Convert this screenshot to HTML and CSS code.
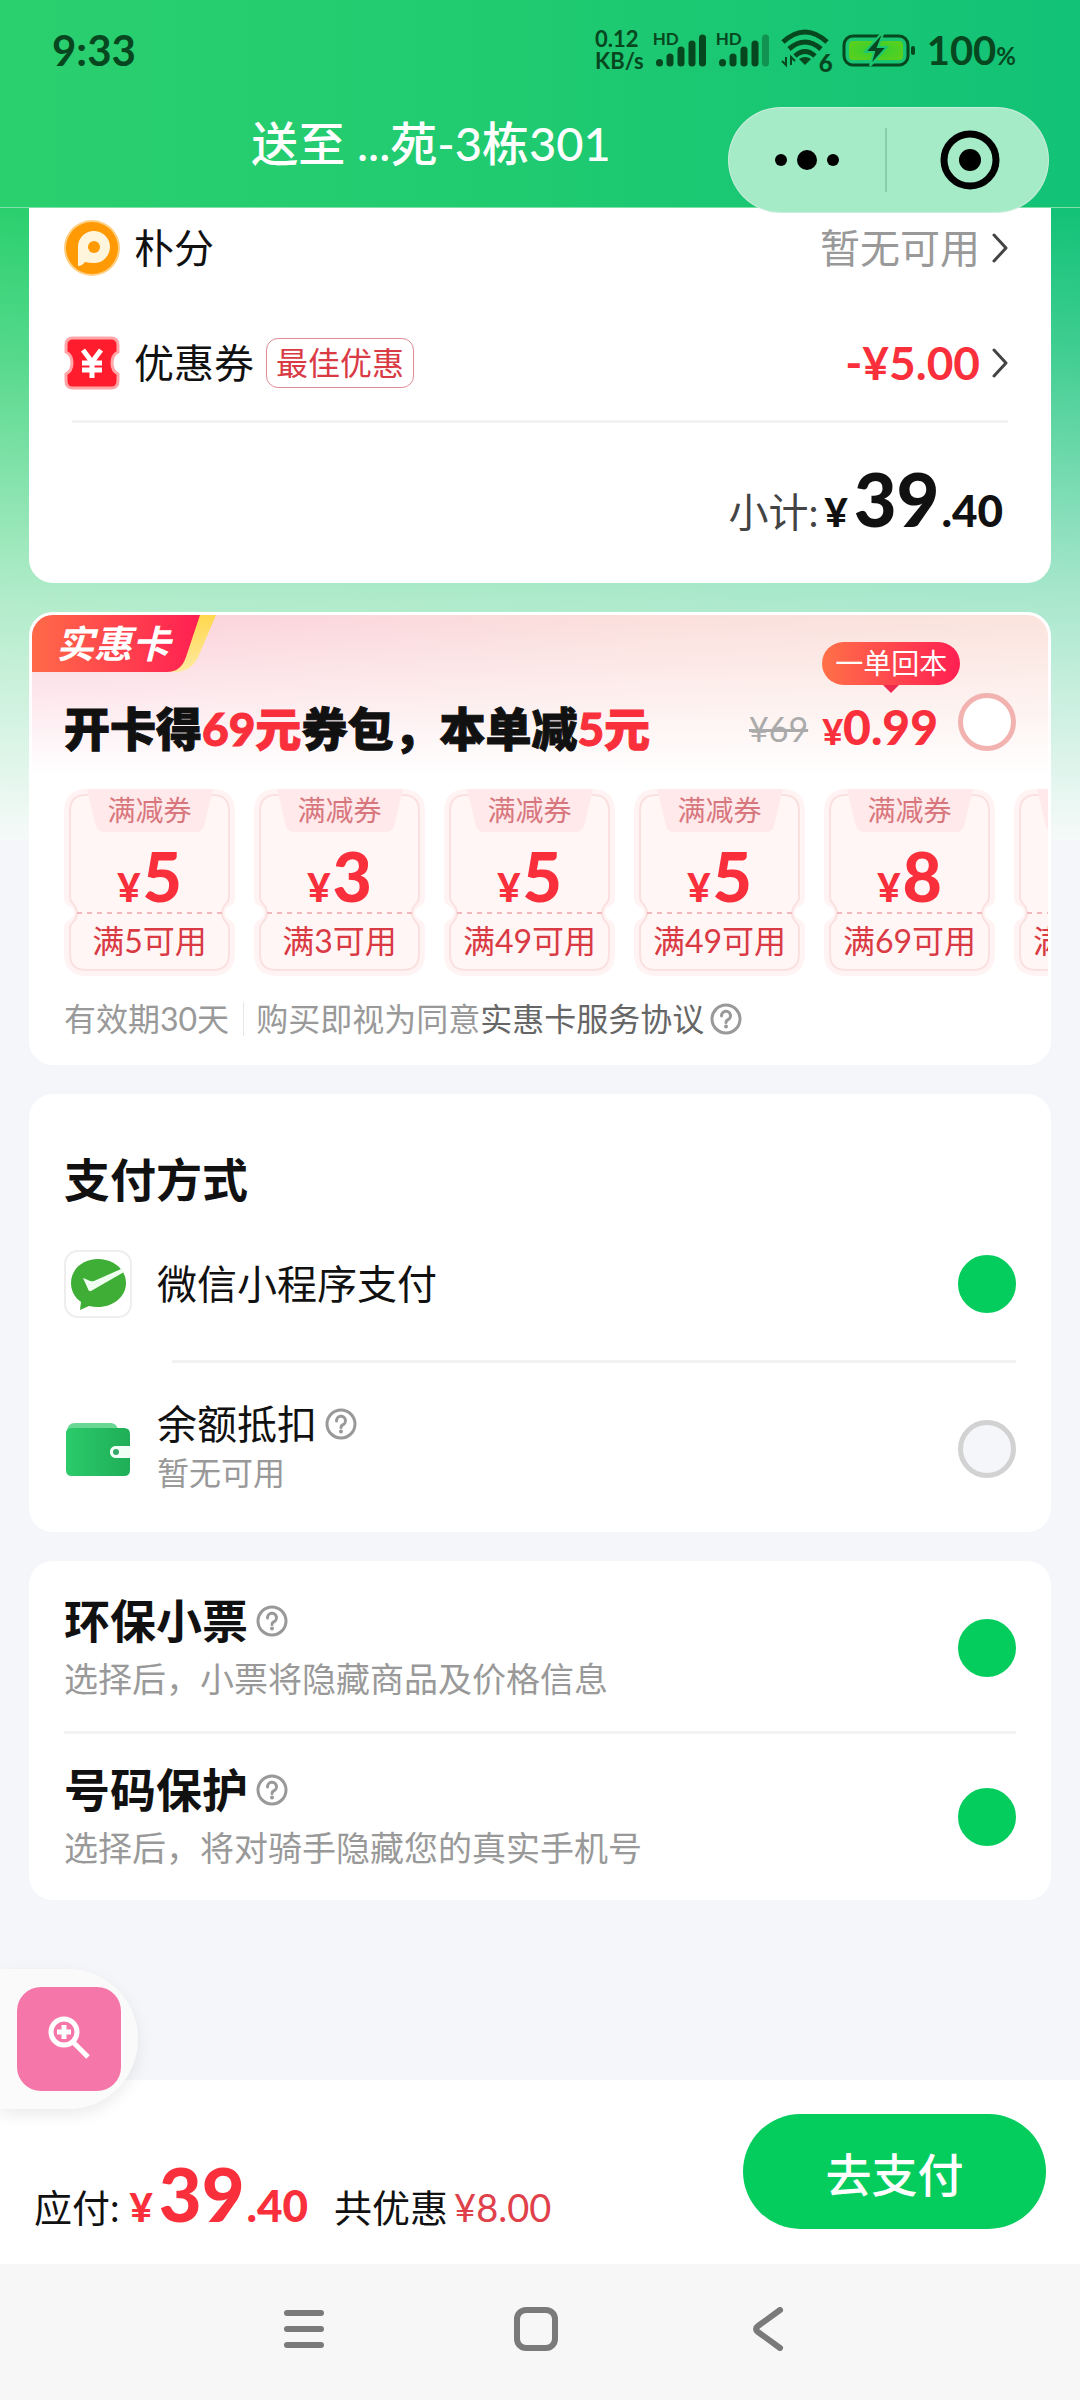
FILE: index.html
```html
<!DOCTYPE html>
<html lang="zh-CN">

<head>
    <meta charset="UTF-8" />
    <meta name="viewport" content="width=device-width, initial-scale=1.0" />
    <title>确认订单</title>
    <link rel="stylesheet" href="styles.css">
</head>

<body>
    <svg class="defs" width="0" height="0" aria-hidden="true">
        <defs>
            <linearGradient id="ribbonRed" x1="0" y1="0" x2="1" y2="0">
                <stop offset="0" stop-color="#ff6a48" />
                <stop offset="1" stop-color="#ff1f52" />
            </linearGradient>
            <linearGradient id="ribbonYellow" x1="0" y1="0" x2="0" y2="1">
                <stop offset="0" stop-color="#ffd84e" />
                <stop offset="1" stop-color="#ffe9a0" />
            </linearGradient>
            <linearGradient id="walletGreen" x1="0" y1="0" x2="1" y2="0">
                <stop offset="0" stop-color="#2bcb6b" />
                <stop offset="1" stop-color="#1fae57" />
            </linearGradient>
            <radialGradient id="batteryFill" cx="0.5" cy="0.5" r="0.7">
                <stop offset="0.3" stop-color="#3fd02c" />
                <stop offset="1" stop-color="#62cf1a" />
            </radialGradient>
        </defs>
        <symbol id="ticket" viewBox="0 0 171 187">
            <path d="M23 2H148Q169 2 169 23V109Q169 114 164 116A9 9 0 0 0 164 132Q169 134 169 139V164Q169 185 148 185H23Q2 185 2 164V139Q2 134 7 132A9 9 0 0 0 7 116Q2 114 2 109V23Q2 2 23 2Z" fill="#fff5f4" stroke="#fff3f3" stroke-width="4" />
            <path d="M22 6H149Q165 6 165 22V109C165 115 158 115 158 124C158 133 165 133 165 139V165Q165 181 149 181H22Q6 181 6 165V139C6 133 13 133 13 124C13 115 6 115 6 109V22Q6 6 22 6Z" fill="#fff6f5" stroke="#fbe0e0" stroke-width="2" />
            <path d="M23 0H149L140 37Q138 43 132 43H40Q34 43 32 37Z" fill="#ffe9ea" />
            <path d="M13 124H158" stroke="#f0b9bd" stroke-width="2" stroke-dasharray="5 5" />
        </symbol>
        <symbol id="help" viewBox="0 0 32 32">
            <circle cx="16" cy="16" r="14" fill="none" stroke="#999" stroke-width="3" />
            <path d="M11.500 13A4.500 4.500 0 1 1 17.500 17Q16 17.600 16 19.500" fill="none" stroke="#999" stroke-width="3" stroke-linecap="round" />
            <circle cx="16" cy="23.500" r="2" fill="#999" />
        </symbol>
        <symbol id="chevron" viewBox="0 0 16 30">
            <path d="M2 2L14 15L2 28" fill="none" stroke="#444" stroke-width="3" stroke-linecap="round" stroke-linejoin="round" />
        </symbol>
    </svg>

    <div class="page">
        <header class="header">
            <div class="status-bar">
                <span class="clock">9:33</span>
                <div class="status-icons">
                    <span class="net-speed"><span>0.12</span><span>KB/s</span></span>
                    <span class="signal">
                        <span class="hd">HD</span>
                        <svg width="52" height="34" viewBox="0 0 52 34">
                            <g stroke-width="7" stroke-linecap="round" stroke="#07471f">
                                <path d="M4.500 29.500V30" />
                                <path d="M15 24V30" />
                                <path d="M26 17V30" />
                                <path d="M37 11V30" />
                                <path d="M47.500 5V30" />
                            </g>
                        </svg>
                    </span>
                    <span class="signal">
                        <span class="hd">HD</span>
                        <svg width="52" height="34" viewBox="0 0 52 34">
                            <g stroke-width="7" stroke-linecap="round" stroke="#07471f">
                                <path d="M4.500 29.500V30" />
                                <path d="M15 24V30" />
                                <path d="M26 17V30" />
                                <path d="M37 11V30" />
                                <path d="M47.500 5V30" opacity="0.4" />
                            </g>
                        </svg>
                    </span>
                    <span class="wifi">
                        <svg width="50" height="42" viewBox="0 0 50 42">
                            <g fill="none" stroke="#07471f" stroke-width="5">
                                <path d="M2 13Q24 -7 46 13" />
                                <path d="M8 20Q24 6 40 20" />
                                <path d="M14 27Q24 18 34 27" />
                            </g>
                            <path d="M18 30Q24 26 30 30L24 36Z" fill="#07471f" />
                            <path d="M5 28V36L1 32M10 36V28L14 32" fill="none" stroke="#07471f" stroke-width="2" />
                        </svg>
                        <span class="wifi-gen">6</span>
                    </span>
                    <svg class="battery" width="74" height="34" viewBox="0 0 74 34">
                        <rect x="2" y="3" width="64" height="29" rx="9" fill="none" stroke="#07471f" stroke-width="3" />
                        <rect x="7" y="8" width="54" height="19" rx="4" fill="url(#batteryFill)" />
                        <rect x="69" y="13" width="4" height="9" rx="2" fill="#07471f" />
                        <path d="M39 1L23 19H32L28 33L45 14H36L41 1Z" fill="#07471f" stroke="#1dc771" stroke-width="2" />
                    </svg>
                    <span class="battery-level">100<small>%</small></span>
                </div>
            </div>
            <h1 class="address">送至 ...苑-3栋301</h1>
            <div class="capsule">
                <button class="capsule-btn" aria-label="更多">
                    <svg width="64" height="64" viewBox="0 0 64 64">
                        <circle cx="6" cy="32" r="6" />
                        <circle cx="32" cy="32" r="10" />
                        <circle cx="58" cy="32" r="6" />
                    </svg>
                </button>
                <span class="capsule-line"></span>
                <button class="capsule-btn capsule-close" aria-label="关闭">
                    <svg width="64" height="64" viewBox="0 0 64 64">
                        <circle cx="32" cy="32" r="26" fill="none" stroke="#000" stroke-width="7" />
                        <circle cx="32" cy="32" r="11" />
                    </svg>
                </button>
            </div>
        </header>

        <main class="content">
            <!-- 金额明细 -->
            <section class="card card-bill">
                <button class="bill-row">
                    <svg width="56" height="58" viewBox="0 0 56 58">
                        <circle cx="28" cy="29" r="28" fill="#ffcf80" />
                        <circle cx="28" cy="29" r="26" fill="#ff9a05" />
                        <path d="M14 47V27A16 16 0 1 1 30 44Q25 44 21 43Q18 47 14 47Z" fill="#fff4dc" />
                        <circle cx="30" cy="28" r="6" fill="#ff9a05" />
                    </svg>
                    <span class="bill-name">朴分</span>
                    <span class="bill-value muted">暂无可用</span>
                    <svg width="16" height="30"><use href="#chevron" /></svg>
                </button>
                <button class="bill-row">
                    <svg width="56" height="54" viewBox="0 0 56 54">
                        <path d="M9 2H47Q54 2 54 9V16Q48 19 48 27Q48 35 54 38V45Q54 52 47 52H9Q2 52 2 45V38Q8 35 8 27Q8 19 2 16V9Q2 2 9 2Z" fill="#ff1c2c" stroke="#ffa5a8" stroke-width="3" />
                        <path d="M19 14L28 26L37 14M28 26V42M18 27H38M18 34H38" fill="none" stroke="#fff" stroke-width="5" />
                    </svg>
                    <span class="bill-name">优惠券</span>
                    <span class="tag">最佳优惠</span>
                    <span class="bill-value discount">-¥5.00</span>
                    <svg width="16" height="30"><use href="#chevron" /></svg>
                </button>
                <hr class="line line-bill">
                <div class="subtotal">
                    <span>小计:</span>
                    <strong class="price"><small>¥</small>39<small>.40</small></strong>
                </div>
            </section>

            <!-- 实惠卡 -->
            <section class="card card-vip">
                <div class="ribbon">
                    <svg class="ribbon-bg" width="184" height="57" viewBox="0 0 184 57">
                        <path d="M150 0H184L167 40Q161 55 146 57H130Z" fill="url(#ribbonYellow)" />
                        <path d="M0 0H168L154 42Q149 57 135 57H0Z" fill="url(#ribbonRed)" />
                    </svg>
                    <span class="ribbon-text">实惠卡</span>
                </div>
                <div class="vip-head">
                    <label class="vip-title" for="vipCard">开卡得<em>69元</em>券包，本单减<em>5元</em></label>
                    <del class="vip-old">¥69</del>
                    <span class="vip-price">
                        <span class="bubble">一单回本</span>
                        <small>¥</small>0.99
                    </span>
                    <input class="check check-vip" type="checkbox" id="vipCard">
                </div>
                <ul class="coupons">
                    <li class="coupon">
                        <svg class="coupon-bg" width="171" height="187"><use href="#ticket" /></svg>
                        <span class="coupon-type">满减券</span>
                        <strong class="coupon-amount"><small>¥</small>5</strong>
                        <span class="coupon-rule">满5可用</span>
                    </li>
                    <li class="coupon">
                        <svg class="coupon-bg" width="171" height="187"><use href="#ticket" /></svg>
                        <span class="coupon-type">满减券</span>
                        <strong class="coupon-amount"><small>¥</small>3</strong>
                        <span class="coupon-rule">满3可用</span>
                    </li>
                    <li class="coupon">
                        <svg class="coupon-bg" width="171" height="187"><use href="#ticket" /></svg>
                        <span class="coupon-type">满减券</span>
                        <strong class="coupon-amount"><small>¥</small>5</strong>
                        <span class="coupon-rule">满49可用</span>
                    </li>
                    <li class="coupon">
                        <svg class="coupon-bg" width="171" height="187"><use href="#ticket" /></svg>
                        <span class="coupon-type">满减券</span>
                        <strong class="coupon-amount"><small>¥</small>5</strong>
                        <span class="coupon-rule">满49可用</span>
                    </li>
                    <li class="coupon">
                        <svg class="coupon-bg" width="171" height="187"><use href="#ticket" /></svg>
                        <span class="coupon-type">满减券</span>
                        <strong class="coupon-amount"><small>¥</small>8</strong>
                        <span class="coupon-rule">满69可用</span>
                    </li>
                    <li class="coupon">
                        <svg class="coupon-bg" width="171" height="187"><use href="#ticket" /></svg>
                        <span class="coupon-type"></span>
                        <strong class="coupon-amount"></strong>
                        <span class="coupon-rule">满99可用</span>
                    </li>
                </ul>
                <div class="vip-foot">
                    <span>有效期30天</span>
                    <span class="vip-agree">购买即视为同意<a href="#">实惠卡服务协议</a></span>
                    <button class="help" aria-label="说明"><svg width="32" height="32"><use href="#help" /></svg></button>
                </div>
            </section>

            <!-- 支付方式 -->
            <section class="card card-pay">
                <h2 class="card-title">支付方式</h2>
                <div class="option">
                    <svg width="68" height="68" viewBox="0 0 68 68">
                        <rect x="1" y="1" width="66" height="66" rx="13" fill="#fff" stroke="#eee" stroke-width="2" />
                        <path d="M34 9C49 9 62 19 62 33C62 47 49 57 34 57Q29 57 25 56L16 60L17 52C11 48 7 41 7 33C7 19 19 9 34 9Z" fill="#3fae36" />
                        <path d="M19 28L24 30Q27 32 30 31L57 19Q60 19 60 22L27 41Q25 42 24 39Z" fill="#effff0" />
                    </svg>
                    <label class="option-name" for="payWechat">微信小程序支付</label>
                    <input class="check" type="checkbox" id="payWechat" checked>
                </div>
                <hr class="line line-pay">
                <div class="option">
                    <svg width="68" height="54" viewBox="0 0 68 54">
                        <path d="M3 10Q3 1 11 1H47Q52 1 54 7L58 16H3Z" fill="#6bd795" />
                        <path d="M2 10Q3 6 8 6H60Q66 6 66 12V24H52A6 6 0 0 0 52 36H66V48Q66 54 60 54H8Q2 54 2 48Z" fill="url(#walletGreen)" />
                        <path d="M66 24H52A6 6 0 0 0 52 36H66Z" fill="#f0fff5" />
                        <circle cx="52" cy="30" r="3" fill="#38a868" />
                    </svg>
                    <div class="option-text">
                        <div class="name-line">
                            <label class="option-name" for="payBalance">余额抵扣</label>
                            <button class="help" aria-label="说明"><svg width="32" height="32"><use href="#help" /></svg></button>
                        </div>
                        <p class="option-note">暂无可用</p>
                    </div>
                    <input class="check" type="checkbox" id="payBalance">
                </div>
            </section>

            <!-- 小票和号码 -->
            <section class="card card-privacy">
                <div class="option">
                    <div class="option-text">
                        <div class="name-line">
                            <label class="card-title" for="ecoReceipt">环保小票</label>
                            <button class="help" aria-label="说明"><svg width="32" height="32"><use href="#help" /></svg></button>
                        </div>
                        <p class="option-desc">选择后，小票将隐藏商品及价格信息</p>
                    </div>
                    <input class="check" type="checkbox" id="ecoReceipt" checked>
                </div>
                <hr class="line">
                <div class="option">
                    <div class="option-text">
                        <div class="name-line">
                            <label class="card-title" for="phoneGuard">号码保护</label>
                            <button class="help" aria-label="说明"><svg width="32" height="32"><use href="#help" /></svg></button>
                        </div>
                        <p class="option-desc">选择后，将对骑手隐藏您的真实手机号</p>
                    </div>
                    <input class="check" type="checkbox" id="phoneGuard" checked>
                </div>
            </section>
        </main>

        <footer class="pay-bar">
            <div class="zoom-float">
                <button class="zoom-btn" aria-label="放大">
                    <svg width="44" height="50" viewBox="0 0 44 50">
                        <g fill="none" stroke="#fff" stroke-width="5">
                            <circle cx="17" cy="18" r="13" />
                            <path d="M17 11V25M10 18H24M26 28L41 43" />
                        </g>
                    </svg>
                </button>
            </div>
            <div class="pay-info">
                <span>应付:</span>
                <strong class="price price-red"><small>¥</small>39<small>.40</small></strong>
                <span>共优惠</span>
                <span class="pay-save">¥8.00</span>
            </div>
            <button class="pay-btn">去支付</button>
        </footer>

        <nav class="sys-nav">
            <button aria-label="菜单">
                <svg width="44" height="44" viewBox="0 0 44 44"><path d="M5 6H39M5 22H39M5 38H39" /></svg>
            </button>
            <button aria-label="主屏幕">
                <svg width="44" height="44" viewBox="0 0 44 44"><rect x="3" y="3" width="38" height="38" rx="9" /></svg>
            </button>
            <button aria-label="返回">
                <svg width="44" height="44" viewBox="0 0 44 44"><path d="M34 3L12 19Q8 22 12 25L34 41" /></svg>
            </button>
        </nav>
    </div>
</body>

</html>
```

FILE: styles.css
```css
:root {
    --green: #04cd5e;
    --red: #f9303c;
    --text: #111;
    --muted: #999;
    --bg: #f4f6fa;
    --line: #f2f2f2;
    --brand: linear-gradient(90deg, #2bd06e, #1fca70 50%, #12c277);
}

* {
    box-sizing: border-box;
}

body {
    margin: 0;
    background: var(--bg);
    color: var(--text);
    font-family: Lato, "Noto Sans CJK SC", sans-serif;
}

button {
    padding: 0;
    border: none;
    background: none;
    color: inherit;
    font: inherit;
    cursor: pointer;
}

h1,
h2,
p,
ul {
    margin: 0;
    padding: 0;
}

svg {
    display: block;
    flex: none;
}

small {
    line-height: 1;
}

.defs {
    position: absolute;
}

.page {
    position: relative;
    display: flex;
    flex-direction: column;
    min-height: 100vh;
    background:
        linear-gradient(180deg, rgba(246, 250, 249, 0) 210px, rgba(246, 250, 249, 0.2) 350px, rgba(246, 250, 249, 0.65) 590px, rgba(246, 250, 249, 1) 840px) 0 0 / 100% 840px no-repeat,
        var(--brand) 0 0 / 100% 840px no-repeat,
        var(--bg);
}

/* header */
.header {
    position: relative;
    height: 208px;
    background: var(--brand);
    border-bottom: 1px solid #7fe0a8;
}

.status-bar {
    display: flex;
    align-items: center;
    justify-content: space-between;
    height: 100px;
    padding: 0 64px 0 52px;
    color: #07471f;
    font-weight: 700;
}

.clock {
    font-size: 42px;
}

.status-icons {
    display: flex;
    align-items: center;
    gap: 11px;
}

.net-speed {
    display: flex;
    flex-direction: column;
    font-size: 22px;
    line-height: 22px;
}

.signal,
.wifi {
    position: relative;
}

.hd {
    position: absolute;
    top: -2px;
    left: -2px;
    font-size: 17px;
    line-height: 16px;
}

.wifi-gen {
    position: absolute;
    right: -2px;
    bottom: -4px;
    font-size: 24px;
    font-weight: 900;
    line-height: 24px;
}

.battery-level {
    font-size: 40px;
}

.battery-level small {
    font-size: 24px;
}

.address {
    padding: 0 352px 0 134px;
    color: #fff;
    font-size: 47px;
    font-weight: 500;
    line-height: 86px;
    text-align: center;
    white-space: nowrap;
}

.capsule {
    position: absolute;
    top: 107px;
    right: 31px;
    z-index: 2;
    display: flex;
    align-items: center;
    width: 321px;
    height: 106px;
    border: 1px solid rgba(230, 240, 235, 0.6);
    border-radius: 53px;
    background: #a5ebc8;
}

.capsule-btn {
    flex: 1;
    display: flex;
    justify-content: center;
}

.capsule-close {
    padding-left: 6px;
}

.capsule-line {
    width: 2px;
    height: 64px;
    background: #86cfa9;
}

/* cards */
.content {
    flex: 1;
    display: flex;
    flex-direction: column;
    gap: 29px;
    padding: 0 29px 29px;
}

.card {
    padding: 0 35px;
    border-radius: 24px;
    background: #fff;
}

.card-title {
    font-size: 46px;
    font-weight: 700;
    line-height: 56px;
}

.line {
    width: 100%;
    height: 3px;
    margin: 0;
    border: none;
    background: var(--line);
}

.muted {
    color: var(--muted);
}

.help {
    display: flex;
}

.check {
    flex: none;
    width: 58px;
    height: 58px;
    margin: 0 0 0 auto;
    border: 5px solid #d2d2d2;
    border-radius: 50%;
    background: var(--bg);
    appearance: none;
}

.check:checked {
    border-color: var(--green);
    background: var(--green);
}

.check-vip {
    border-color: #f2b2b0;
    background: #fff;
}

/* bill */
.card-bill {
    padding-top: 11px;
    padding-bottom: 44px;
    border-radius: 0 0 24px 24px;
}

.bill-row {
    display: flex;
    align-items: center;
    width: 100%;
    height: 58px;
    padding-right: 8px;
    font-size: 40px;
    line-height: 54px;
}

.bill-row + .bill-row {
    margin-top: 57px;
}

.bill-name {
    margin-left: 14px;
}

.bill-value {
    margin: 0 12px 0 auto;
}

.discount {
    color: var(--red);
    font-size: 46px;
    font-weight: 700;
}

.tag {
    margin-left: 12px;
    padding: 0 9px;
    border: 1px solid #dd8c93;
    border-radius: 12px;
    color: #d93a44;
    font-size: 32px;
    line-height: 48px;
}

.line-bill {
    width: auto;
    margin: 28px 8px 0;
}

.subtotal {
    display: flex;
    align-items: baseline;
    justify-content: flex-end;
    gap: 6px;
    padding: 36px 13px 0 0;
    color: #444;
    font-size: 40px;
    line-height: 54px;
}

.price {
    color: var(--text);
    font-size: 74px;
    font-weight: 900;
    line-height: 80px;
}

.price small {
    margin-left: 2px;
    font-size: 44px;
}

.price small:first-child {
    margin: 0 6px 0 0;
    font-size: 40px;
}

.price-red {
    color: var(--red);
}

/* vip card */
.card-vip {
    padding-bottom: 26px;
    overflow: hidden;
    border: 3px solid #fff;
    padding-right: 0;
    padding-left: 32px;
    background:
        linear-gradient(180deg, rgba(255, 255, 255, 0), #fff 160px),
        linear-gradient(90deg, #fbd0dc, #fbdfdc 60%, #fbe3dd);
}

.ribbon {
    position: relative;
    width: 184px;
    height: 57px;
    margin-left: -32px;
}

.ribbon-bg {
    position: absolute;
}

.ribbon-text {
    position: relative;
    padding-left: 24px;
    color: #fff;
    font-size: 38px;
    font-style: italic;
    font-weight: 700;
    line-height: 57px;
}

.vip-head {
    display: flex;
    align-items: flex-end;
    height: 58px;
    margin: 21px 32px 0 0;
}

.vip-title {
    font-size: 46px;
    font-weight: 900;
    line-height: 44px;
    white-space: nowrap;
    -webkit-text-stroke: 1px;
}

.vip-title em {
    color: var(--red);
    font-style: normal;
}

.vip-old {
    margin-left: auto;
    color: #aaa;
    font-size: 34px;
    line-height: 44px;
}

.vip-price {
    position: relative;
    display: flex;
    align-items: baseline;
    margin: 0 20px 0 14px;
    color: var(--red);
    font-size: 48px;
    font-weight: 900;
    line-height: 48px;
}

.vip-price small {
    font-size: 36px;
}

.vip-head .check {
    margin-left: 0;
}

.bubble {
    position: absolute;
    bottom: 66px;
    left: 0;
    padding: 0 13px;
    border-radius: 22px;
    background: linear-gradient(90deg, #ff7048, #ff1f52);
    color: #fff;
    font-size: 28px;
    font-weight: 400;
    line-height: 43px;
    white-space: nowrap;
}

.bubble::after {
    content: "";
    position: absolute;
    top: 100%;
    left: 50%;
    margin-left: -8px;
    border: 8px solid transparent;
    border-top-color: #ee2a50;
    border-bottom: none;
}

.coupons {
    display: flex;
    gap: 19px;
    margin-top: 38px;
    overflow: hidden;
    list-style: none;
}

.coupon {
    position: relative;
    flex: none;
    display: flex;
    flex-direction: column;
    align-items: center;
    width: 171px;
    height: 187px;
}

.coupon-bg {
    position: absolute;
}

.coupon-type,
.coupon-amount,
.coupon-rule {
    position: relative;
}

.coupon-type {
    height: 43px;
    color: #d8767e;
    font-size: 28px;
    line-height: 43px;
}

.coupon-amount {
    height: 88px;
    color: var(--red);
    font-size: 68px;
    font-weight: 900;
    line-height: 88px;
}

.coupon-amount small {
    margin-right: 2px;
    font-size: 40px;
}

.coupon-rule {
    color: #d93a44;
    font-size: 32px;
    line-height: 42px;
}

.vip-foot {
    display: flex;
    align-items: center;
    margin-top: 26px;
    color: var(--muted);
    font-size: 32px;
    line-height: 34px;
}

.vip-agree {
    margin: 0 6px 0 14px;
    padding-left: 12px;
    border-left: 1px solid #e6e6e6;
}

.vip-agree a {
    color: #666;
    text-decoration: none;
}

/* pay */
.card-pay {
    padding-top: 58px;
    padding-bottom: 34px;
}

.option {
    display: flex;
    align-items: center;
}

.card-pay .card-title {
    margin-bottom: 42px;
}

.card-pay .option > svg {
    margin-right: 25px;
}

.option-name {
    font-size: 40px;
    line-height: 48px;
}

.name-line {
    display: flex;
    align-items: center;
    gap: 8px;
}

.option-note {
    color: var(--muted);
    font-size: 32px;
    line-height: 50px;
}

.option-desc {
    margin-top: 6px;
    color: var(--muted);
    font-size: 34px;
    line-height: 48px;
}

.line-pay {
    width: auto;
    margin: 42px 0 37px 108px;
}

.card-privacy {
    padding-top: 32px;
    padding-bottom: 28px;
}

.card-privacy .line {
    margin: 28px 0;
}

/* bottom */
.pay-bar {
    position: relative;
    display: flex;
    align-items: flex-end;
    justify-content: space-between;
    padding: 34px 34px 35px;
    background: #fff;
}

.pay-info {
    display: flex;
    align-items: baseline;
    font-size: 38px;
    line-height: 44px;
}

.pay-info .price {
    margin: 0 26px 0 10px;
    line-height: 68px;
}

.pay-save {
    margin-left: 6px;
    color: #e0404a;
}

.pay-btn {
    width: 303px;
    height: 115px;
    border-radius: 58px;
    background: var(--green);
    color: #fff;
    font-size: 46px;
    font-weight: 500;
}

.zoom-float {
    position: absolute;
    top: -111px;
    left: 0;
    padding: 18px 17px;
    border-radius: 0 70px 70px 0;
    background: rgba(250, 250, 250, 0.85);
    box-shadow: 0 6px 16px rgba(0, 0, 0, 0.08);
}

.zoom-btn {
    display: flex;
    align-items: center;
    justify-content: center;
    width: 104px;
    height: 104px;
    border-radius: 24px;
    background: #f576a9;
}

.sys-nav {
    display: flex;
    align-items: center;
    justify-content: center;
    gap: 188px;
    height: 136px;
    padding: 0 8px 6px 0;
    background: #f7f7f7;
}

.sys-nav svg {
    fill: none;
    stroke: #7a7a7a;
    stroke-width: 6;
    stroke-linecap: round;
    stroke-linejoin: round;
}
```
